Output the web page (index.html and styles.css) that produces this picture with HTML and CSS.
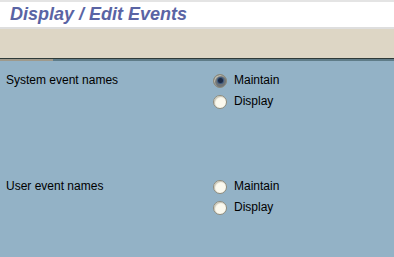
FILE: index.html
```html
<!DOCTYPE html>
<html>
<head>
<meta charset="utf-8">
<link rel="stylesheet" href="styles.css">
</head>
<body>
<div class="titlebar"><h1 class="title">Display / Edit Events</h1></div>
<div class="toolbar"></div>
<div class="toolbar-edge"><span class="edge-left"></span></div>
<main class="content">
  <section class="group">
    <div class="label">System event names</div>
    <div class="radios">
      <div class="radio-row"><span class="radio checked"></span><span>Maintain</span></div>
      <div class="radio-row"><span class="radio"></span><span>Display</span></div>
    </div>
  </section>
  <section class="group">
    <div class="label">User event names</div>
    <div class="radios">
      <div class="radio-row"><span class="radio"></span><span>Maintain</span></div>
      <div class="radio-row"><span class="radio"></span><span>Display</span></div>
    </div>
  </section>
</main>
</body>
</html>
```
FILE: styles.css
```css
* { box-sizing: border-box; }
html, body { margin: 0; padding: 0; }
body {
  width: 394px;
  height: 257px;
  overflow: hidden;
  background: #93b2c6;
  font-family: "Liberation Sans", Arial, sans-serif;
  font-size: 12px;
  color: #000;
}
.titlebar {
  height: 29px;
  background: #fff;
  border-top: 2px solid #e4e4e4;
  border-bottom: 2px solid #dedede;
  padding-left: 10px;
}
.title {
  margin: 0;
  font-size: 18px;
  font-weight: bold;
  font-style: italic;
  color: #5a64a4;
  line-height: 24px;
}
.toolbar {
  height: 29px;
  background: #ddd6c5;
}
.toolbar-edge {
  height: 3px;
  background: #5f7c88;
  border-top: 1px solid #2e3a38;
  display: flex;
}
.edge-left {
  width: 53px;
  background: #9e9a8c;
}
.content {
  padding: 12px 0 0 6px;
  display: flex;
  flex-direction: column;
  gap: 70px;
}
.group {
  display: flex;
  align-items: flex-start;
}
.label {
  width: 207px;
  line-height: 15px;
}
.radios {
  display: flex;
  flex-direction: column;
  gap: 6px;
}
.radio-row {
  display: flex;
  align-items: center;
  gap: 7px;
  line-height: 15px;
}
.radio {
  width: 14px;
  height: 14px;
  border-radius: 50%;
  border: 1px solid #8c8a7c;
  background: #fbf9ee;
  box-shadow: inset 1px 1px 1px #c9c6b6;
  display: inline-block;
  position: relative;
}
.radio.checked {
  background: #6e7478;
}
.radio.checked::after {
  content: "";
  position: absolute;
  left: 3.5px;
  top: 3.5px;
  width: 5px;
  height: 5px;
  border-radius: 50%;
  background: #1c2a44;
  box-shadow: 0 0 0 1px #3d5a80;
}
```
